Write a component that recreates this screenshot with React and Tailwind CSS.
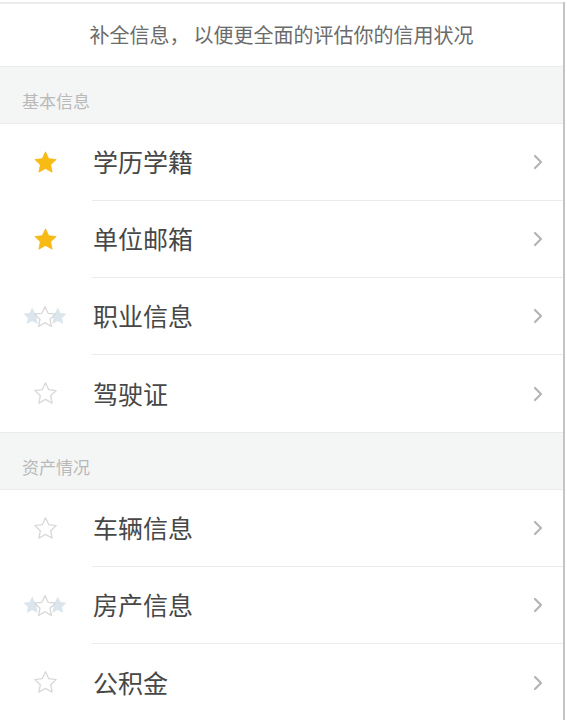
const SECTIONS = [
  {
    title: "基本信息",
    items: [
      { label: "学历学籍", star: "full" },
      { label: "单位邮箱", star: "full" },
      { label: "职业信息", star: "multi" },
      { label: "驾驶证", star: "empty" },
    ],
  },
  {
    title: "资产情况",
    items: [
      { label: "车辆信息", star: "empty" },
      { label: "房产信息", star: "multi" },
      { label: "公积金", star: "empty" },
    ],
  },
];

const STAR = "M12 2.5l2.9 6.1 6.6.8-4.9 4.6 1.3 6.6L12 17.3 6.1 20.6l1.3-6.6L2.5 9.4l6.6-.8z";

function StarIcon({ type }) {
  if (type === "full") {
    return (
      <svg width="27" height="27" viewBox="0 0 24 24">
        <path d={STAR} fill="#f8bb14" stroke="#f5b00f" strokeWidth="0.6" strokeLinejoin="round" />
      </svg>
    );
  }
  if (type === "multi") {
    return (
      <svg width="48" height="26" viewBox="0 0 44 24">
        <path d={STAR} transform="translate(0 1) scale(0.85)" fill="#dbe5ec" />
        <path d={STAR} transform="translate(23.6 1) scale(0.85)" fill="#dbe5ec" />
        <path d={STAR} transform="translate(10 0)" fill="#ffffff" stroke="#d8d8d8" strokeWidth="1.2" strokeLinejoin="round" />
      </svg>
    );
  }
  return (
    <svg width="27" height="27" viewBox="0 0 24 24">
      <path d={STAR} fill="none" stroke="#d9d9d9" strokeWidth="1.2" strokeLinejoin="round" />
    </svg>
  );
}

function Chevron() {
  return (
    <svg width="12" height="18" viewBox="0 0 12 18" fill="none" stroke="#b4b4b4" strokeWidth="2.2" strokeLinecap="round" strokeLinejoin="round">
      <path d="M3 3l6 6-6 6" />
    </svg>
  );
}

export default function App() {
  return (
    <div
      className="w-[567px] h-[720px] overflow-hidden bg-white"
      style={{ fontFamily: "'Noto Sans CJK SC', 'Noto Sans', sans-serif" }}
    >
      <div className="w-[565px] min-h-[720px] border-r-2 border-[#c4c4c4] bg-white">
        {/* top hint */}
        <div className="h-[64px] border-t-2 border-[#ececec] mt-[2px] flex items-center justify-center">
          <span className="text-[20px] text-[#6b6b6b] leading-none">
            补全信息，<span className="ml-[4px]">以便更全面的评估你的信用状况</span>
          </span>
        </div>

        {SECTIONS.map((sec) => (
          <div key={sec.title}>
            <div className="h-[58px] bg-[#f4f5f5] border-y border-[#ebebeb] flex items-center pl-[22px] pt-[10px]">
              <span className="text-[17px] text-[#b9b9b9] leading-none">{sec.title}</span>
            </div>
            {sec.items.map((it, i) => (
              <div key={it.label} className="h-[77px] flex items-center">
                <div className="w-[92px] flex items-center justify-center pr-[2px]">
                  <StarIcon type={it.star} />
                </div>
                <div
                  className={`flex-1 h-full flex items-center justify-between pr-[19px] ${
                    i < sec.items.length - 1 ? "border-b border-[#ebebeb]" : ""
                  }`}
                >
                  <span className="text-[25px] text-[#474747] pl-[1px] leading-none mt-[-1px]">{it.label}</span>
                  <Chevron />
                </div>
              </div>
            ))}
          </div>
        ))}
      </div>
    </div>
  );
}
